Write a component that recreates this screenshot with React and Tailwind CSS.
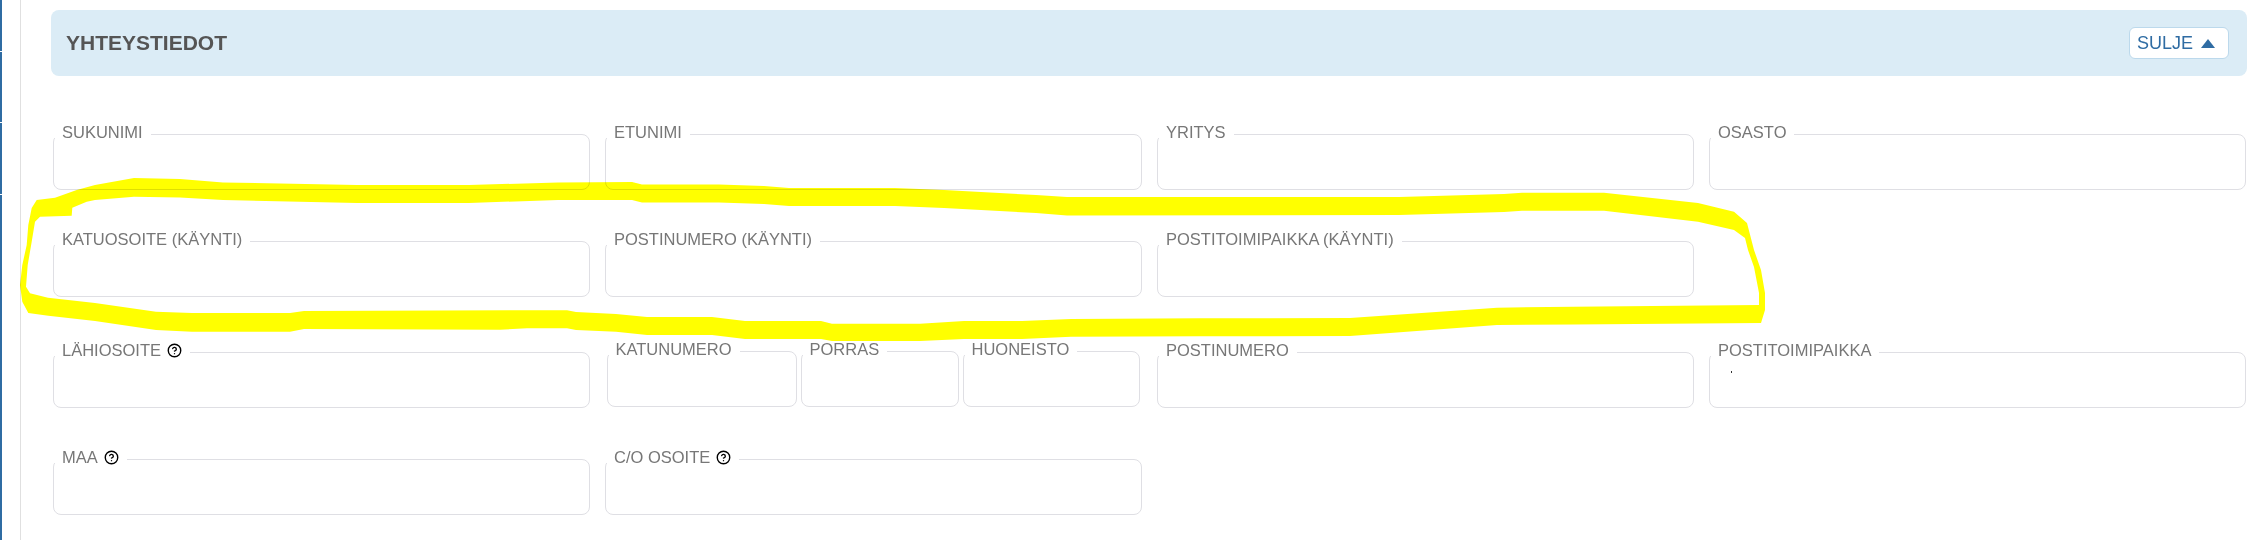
import React from 'react';
import { CircleHelp } from 'lucide-react';

const Field = ({ label, help, className = '', children }) => (
  <div className={`relative h-[56px] rounded-lg border border-[#dfdfe4] bg-white ${className}`}>
    <div className="absolute -left-px -top-[9px] flex h-[12px] items-center gap-[6px] bg-white pl-[9px] pr-[8px] text-[16.5px] leading-none whitespace-nowrap text-[#777]">
      <span>{label}</span>
      {help && <CircleHelp className="h-[15px] w-[15px] text-black" strokeWidth={2.2} />}
    </div>
    {children}
  </div>
);

const Row = ({ className = '', children }) => (
  <div className={`grid grid-cols-4 gap-x-[15px] ${className}`}>{children}</div>
);

const Scribble = () => (
  <svg
    className="pointer-events-none absolute left-0 top-0 mix-blend-multiply"
    width="2260"
    height="540"
    viewBox="0 0 2260 540"
  >
    <path
      fill="#ffff00"
      fillRule="evenodd"
      d="M36.7 200 L55 197.7 76.7 190 95 185 134 178 180 179 223 182.5 357 185 469 185 558 182.5 632 182 642 184.5 719 184.5 764 186 789 188 895 188 944 190 1036 195 1067 197 1399 197 1504 194 1522 192.7 1604 192.7 1698 203 1734 211.7 1747 223 1754 250 1761 270 1765 293 1765 310 1761 323 1573 324.5 1497 325 1350 336 1200 336.3 1071 336.7 1022 339 964 339 920 341 832 341 821 339 745 339 712 335 647 335 616 331.7 576 330 567 328.3 527 328.3 500 329.7 304 329 290 331.7 192 331.7 156 330 95 321 48.3 315.7 28.3 313 22.3 301.7 20 285 22.3 265 26.7 245 28.3 225 31.7 208 Z M72.3 207.7 L86.7 201.7 95 200 134 196.7 180 197.5 223 200 357 203 469 203 558 200 632 200 642 202.5 719 202.5 764 204 789 206 895 206 944 208 1036 213 1067 215.5 1399 215 1504 212 1522 210.7 1604 210.7 1698 221.7 1734 230 1745 238 1748 250 1754 267 1759 293 1759 305 1573 306.7 1497 307.7 1350 318 1200 318.3 1071 319 1022 321 964 321 920 323.7 832 323.7 821 321 745 321 712 317 647 317 616 314 576 312 567 310.3 527 310.3 304 311 290 313 192 313 156 311.7 95 303 48 297.7 30 293.3 26 286.7 27.7 265 31.7 241.7 35 221.7 40 216.7 71.7 215.7 Z"
    />
  </svg>
);

export default function App() {
  return (
    <div className="relative flex h-[540px] w-[2260px] overflow-hidden bg-white font-['Liberation_Sans',Arial,sans-serif]">
      <div className="flex w-[2px] flex-col gap-px">
        <div className="h-[51px] bg-[#2f6ca3]" />
        <div className="h-[70px] bg-[#2f6ca3]" />
        <div className="h-[71px] bg-[#2f6ca3]" />
        <div className="flex-1 bg-[#2f6ca3]" />
      </div>
      <div className="ml-[18px] w-px bg-[#e0e0e0]" />

      <main className="flex-1 pl-[30px] pr-[13px] pt-[10px]">
        <header className="flex h-[66px] items-center justify-between rounded-lg bg-[#dbecf6] pl-[15px] pr-[18px]">
          <h2 className="text-[21px] font-bold text-[#555]">YHTEYSTIEDOT</h2>
          <button className="flex h-[32px] w-[100px] items-center gap-[8px] rounded-md border border-[#bcd9ec] bg-white pl-[7px] text-[18px] text-[#2f6ca3]">
            SULJE
            <svg width="14" height="9" viewBox="0 0 14 9">
              <path d="M7 0 L14 9 L0 9 Z" fill="#2f6ca3" />
            </svg>
          </button>
        </header>

        <div className="pl-[2px] pr-px pt-[58px]">
          <Row>
            <Field label="SUKUNIMI" />
            <Field label="ETUNIMI" />
            <Field label="YRITYS" />
            <Field label="OSASTO" />
          </Row>
          <Row className="mt-[51px]">
            <Field label="KATUOSOITE (KÄYNTI)" />
            <Field label="POSTINUMERO (KÄYNTI)" />
            <Field label="POSTITOIMIPAIKKA (KÄYNTI)" />
          </Row>
          <Row className="mt-[55px]">
            <Field label="LÄHIOSOITE" help />
            <div className="-mt-px flex gap-1 pl-[1.5px] pr-[2.5px]">
              <Field label="KATUNUMERO" className="w-[190px]" />
              <Field label="PORRAS" className="w-[158px]" />
              <Field label="HUONEISTO" className="flex-1" />
            </div>
            <Field label="POSTINUMERO" />
            <Field label="POSTITOIMIPAIKKA">
              <span className="absolute left-[21px] top-[18px] h-[2px] w-px bg-[#333]" />
            </Field>
          </Row>
          <Row className="mt-[51px]">
            <Field label="MAA" help />
            <Field label="C/O OSOITE" help />
          </Row>
        </div>
      </main>

      <Scribble />
    </div>
  );
}
